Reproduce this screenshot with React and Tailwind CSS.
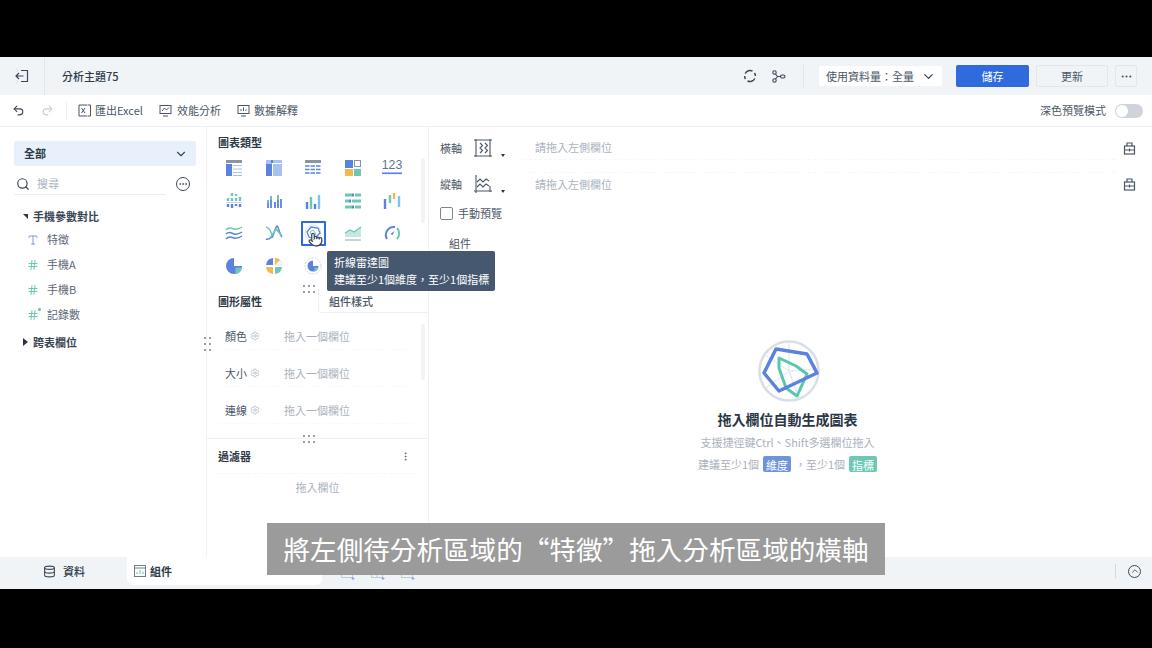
import React from 'react';
import { Undo2, Redo2, ChevronDown, Search, Ellipsis, Database, Pointer, ChevronUp, Hash, Type, Settings, MoreVertical } from 'lucide-react';

const BLUE = '#5b83dd';
const LIGHT = '#a9c1ef';
const TEAL = '#6cc7b5';
const GRAY = '#8a94a3';
const ORANGE = '#f3b94f';

function Ico({ children, size = 18 }) {
  return <svg width={size} height={size} viewBox="0 0 18 18" fill="none">{children}</svg>;
}

const chartIcons = [
  <Ico><rect x="1" y="1" width="16" height="3" fill={GRAY} /><rect x="1" y="5" width="6" height="12" fill={BLUE} /><path d="M8 6.500h9M8 10h9M8 13.500h9M8 16.500h9" stroke={LIGHT} /></Ico>,
  <Ico><rect x="1" y="1" width="16" height="3" fill={LIGHT} /><rect x="1" y="4.500" width="6" height="12.500" fill={BLUE} /><rect x="8" y="5" width="9" height="12" fill={LIGHT} /><rect x="6" y="1" width="2" height="3" fill={BLUE} /></Ico>,
  <Ico><rect x="1" y="1" width="16" height="3" fill={GRAY} /><path d="M1 7h16M1 10.500h16M1 14h16" stroke={BLUE} strokeWidth="1.600" strokeDasharray="4.500 1" /></Ico>,
  <Ico><rect x="1" y="1" width="8" height="8" fill={BLUE} /><rect x="10.500" y="1.500" width="6" height="6" stroke={GRAY} /><rect x="1" y="10" width="8" height="7" fill={ORANGE} /><rect x="10" y="10" width="7" height="7" fill={TEAL} /></Ico>,
  <Ico size={20}><text x="9" y="10" textAnchor="middle" fontSize="11" fill="#66758a" fontFamily="Liberation Sans">123</text><rect x="0" y="13" width="18" height="1.500" fill={BLUE} /></Ico>,
  <Ico><path d="M7 1v3M11 2v2M3 6v3M7 6v3M11 6v3M15 5v4" stroke={TEAL} strokeWidth="2.400" /><path d="M1 10.500h16" stroke="#cfd6de" /><path d="M3 12v3M7 12v4M11 12v2M15 12v3" stroke={BLUE} strokeWidth="2.400" /></Ico>,
  <Ico><path d="M3 8v8M6 4v12M10 10v6M13 3v13M16 7v9" stroke={BLUE} strokeWidth="1.800" /><path d="M3 8v3M6 4v4M13 3v5" stroke={TEAL} strokeWidth="1.800" /></Ico>,
  <Ico><path d="M3 10v7" stroke={BLUE} strokeWidth="2.400" /><path d="M7 5v12" stroke={TEAL} strokeWidth="2.400" /><path d="M11 12v5" stroke={BLUE} strokeWidth="2.400" /><path d="M15 3v14" stroke="#7fc3ee" strokeWidth="2.400" /></Ico>,
  <Ico><path d="M1 3h7M11 3h6M1 9h4M8 9h9M1 15h7M11 15h6" stroke={TEAL} strokeWidth="3" /><path d="M8 3h2M5 9h2M8 15h2" stroke={BLUE} strokeWidth="3" /></Ico>,
  <Ico><path d="M2 7v10" stroke={BLUE} strokeWidth="2.400" /><path d="M7 3v8" stroke={TEAL} strokeWidth="2.400" /><path d="M11 1v6" stroke={ORANGE} strokeWidth="2.400" /><path d="M16 4v11" stroke="#7fc3ee" strokeWidth="2.400" /></Ico>,
  <Ico><path d="M1 6c3-3 5-2 8-1s5 0 8-2" stroke={TEAL} strokeWidth="1.500" /><path d="M1 10c3-3 5-1 8 0s5 0 8-2" stroke={BLUE} strokeWidth="1.500" /><path d="M1 15c3-3 5-2 8-1s5 0 8-2" stroke={BLUE} strokeWidth="1.500" /></Ico>,
  <Ico><path d="M1 3c4 1 6 7 7 11" stroke={TEAL} strokeWidth="1.500" /><path d="M1 15c3 1 7-2 8-6s2-6 3-7 3 10 5 11" stroke={BLUE} strokeWidth="1.500" /><path d="M5 14l6-9 6 7" stroke={TEAL} strokeWidth="1.500" /></Ico>,
  <Ico><circle cx="9" cy="9" r="8" stroke="#dbe2ea" /><path d="M3 8l4-5 7 1 2 5-6 6-5-2z" stroke={BLUE} strokeWidth="1.300" /><path d="M6 8l3-2 3 4-3 4z" stroke={TEAL} /></Ico>,
  <Ico><path d="M1 9l5-3 4 2 7-5v10H1z" fill="#c5e8e0" /><path d="M1 9l5-3 4 2 7-5" stroke={TEAL} strokeWidth="1.300" /><path d="M1 16h16" stroke="#b9c4d0" strokeWidth="1.500" /></Ico>,
  <Ico><path d="M4 15a8 8 0 0 1 8-12" stroke={BLUE} strokeWidth="2" /><path d="M14 4a8 8 0 0 1 0 11" stroke={TEAL} strokeWidth="2" /><path d="M7.500 10l4-3-2 4z" fill="#66758a" /></Ico>,
  <Ico><path d="M9 1a8 8 0 1 0 8 8H9z" fill={BLUE} /><path d="M10.500 10.500H17a7 7 0 0 1-6.500 6.500z" fill={TEAL} /></Ico>,
  <Ico><path d="M8 1a8 8 0 0 0-7 7h7z" fill={BLUE} /><path d="M10 1a8 8 0 0 1 7 7h-7z" fill="#ffffff" stroke="#dfe4ea" /><path d="M10 1v7l5-5a8 8 0 0 0-5-2z" fill={ORANGE} /><path d="M1 10h7v7a8 8 0 0 1-7-7z" fill={ORANGE} /><path d="M10 10h7a8 8 0 0 1-7 7z" fill={TEAL} /></Ico>,
  <Ico><circle cx="9" cy="9" r="8" stroke="#c9d8f0" strokeDasharray="2 1" /><path d="M9 3.500a5.500 5.500 0 1 0 5.500 5.500H9z" fill={BLUE} /><path d="M10.500 10.500h4a5 5 0 0 1-4 4z" fill={TEAL} /></Ico>,
];

function Grip({ className = '' }) {
  return (
    <div className={`grid gap-x-[3px] gap-y-[4px] ${className}`}>
      {[0, 1, 2, 3, 4, 5].map((i) => <span key={i} className="w-[2px] h-[2px] rounded-full bg-[#77808c]" />)}
    </div>
  );
}

function FieldRow({ icon, label, plus }) {
  return (
    <div className="flex items-center h-[25px] pl-[27px] text-[11px] text-[#5c6675]">
      <span className="relative w-[20px] flex">
        {icon}
        {plus && <span className="absolute left-[11px] -top-[1px] w-[3px] h-[3px] rounded-full bg-[#55c3ad]" />}
      </span>
      {label}
    </div>
  );
}

function PropRow({ label }) {
  return (
    <div className="flex items-center h-[37px] ml-[11px] mr-[14px]">
      <div className="flex-1 h-[26px] flex items-center pl-[7px] text-[11px] border-b border-dashed border-[#f7f8f9]">
        <span className="text-[#4c5766] w-[22px] whitespace-nowrap">{label}</span>
        <Settings className="w-[10px] h-[10px] ml-[3px] text-[#b5bec9]" />
        <span className="ml-[24px] text-[#aab2bd]">拖入一個欄位</span>
      </div>
    </div>
  );
}

function AxisRow({ label, edge, children }) {
  return (
    <div className="flex items-center h-[36px] pl-[11px] pr-[16px] text-[11px]">
      <span className="text-[#4c5766] w-[33px]">{label}</span>
      <span className="relative w-[26px] h-[20px]">
        {children}
        <span className="absolute left-[28px] top-[16px] border-x-[2.500px] border-t-[3px] border-x-transparent border-t-[#2c3644]" />
      </span>
      <div className={`ml-[25px] flex-1 h-[24px] flex items-center pl-[11px] text-[#aab2bd] border-dashed border-[#f5f7f9] ${edge}`}>請拖入左側欄位</div>
      <svg className="ml-[8px]" width="13" height="13" viewBox="0 0 13 13" fill="none" stroke="#4c5766" strokeWidth="1.200">
        <rect x="1.500" y="4" width="10" height="8" /><path d="M4 4V1h5v3M1.500 8h10M6.500 6.500v3" />
      </svg>
    </div>
  );
}

function AddChartIcon({ children }) {
  return (
    <svg width="14" height="14" viewBox="0 0 14 14" fill="none" stroke="#c3cad3">
      <rect x="0.500" y="0.500" width="11" height="11" />
      {children}
      <path d="M12 11v3M10.500 12.500h3" stroke="#8aa5e2" />
    </svg>
  );
}

export default function App() {
  return (
    <div className="relative w-[1152px] h-[648px] bg-black flex flex-col overflow-hidden" style={{ fontFamily: '"Noto Sans CJK TC", "Liberation Sans", sans-serif' }}>
      <div className="h-[57px]" />

      {/* top header */}
      <div className="h-[38px] bg-[#f0f4f7] flex items-center">
        <div className="w-[45px] h-full flex items-center justify-center border-r border-[#e3e7eb]">
          <svg width="14" height="14" viewBox="0 0 14 14" fill="none" stroke="#3d4857" strokeWidth="1.200">
            <path d="M6 1.500h6.500v11H6M8.500 7H1M4 4L1 7l3 3" />
          </svg>
        </div>
        <span className="ml-[17px] text-[11px] font-medium text-[#2f3a49]">分析主題75</span>
        <div className="ml-auto flex items-center">
          <svg width="14" height="14" viewBox="0 0 14 14" fill="none" stroke="#3d4857" strokeWidth="1.500">
            <path d="M2.200 4.500A5.500 5.500 0 0 1 9.500 2M11.800 9.500A5.500 5.500 0 0 1 4.500 12M11.500 4a5.500 5.500 0 0 1 .9 3M2.500 10a5.500 5.500 0 0 1-.9-3" />
          </svg>
          <svg className="ml-[14px]" width="15" height="13" viewBox="0 0 15 13" fill="none" stroke="#3d4857" strokeWidth="1.100">
            <circle cx="3.500" cy="2.500" r="1.700" /><circle cx="3.500" cy="10.500" r="1.700" /><rect x="9.500" y="5" width="4.500" height="3" rx="1.500" /><path d="M4.500 4l2 2.500h3M6.500 6.500L4.500 9" />
          </svg>
          <div className="w-px h-[22px] bg-[#e1e5e9] ml-[17px]" />
          <div className="ml-[15px] w-[123px] h-[20px] bg-white rounded-[2px] flex items-center pl-[7px] text-[11px] text-[#4c5766]">
            使用資料量：全量
            <ChevronDown className="w-[15px] h-[15px] ml-[7px] text-[#3d4857]" />
          </div>
          <div className="ml-[14px] w-[73px] h-[22px] bg-[#2f6bdc] rounded-[2px] flex items-center justify-center text-[11px] text-white">儲存</div>
          <div className="ml-[7px] w-[72px] h-[22px] border border-[#e3e7eb] rounded-[2px] flex items-center justify-center text-[11px] text-[#4c5766]">更新</div>
          <div className="ml-[7px] mr-[15px] w-[22px] h-[22px] border border-[#e3e7eb] rounded-[2px] flex items-center justify-center">
            <Ellipsis className="w-[13px] h-[13px] text-[#4c5766]" />
          </div>
        </div>
      </div>

      {/* toolbar */}
      <div className="h-[32px] bg-white border-b border-[#eef0f3] flex items-center text-[11px] text-[#4c5766]">
        <Undo2 className="ml-[12px] w-[13px] h-[13px] text-[#3d4857]" />
        <Redo2 className="ml-[16px] w-[13px] h-[13px] text-[#c9ced5]" />
        <div className="w-px h-[17px] bg-[#eceef1] ml-[12px]" />
        <svg className="ml-[11px]" width="13" height="13" viewBox="0 0 13 13" fill="none" stroke="#4c5766"><path d="M9.500 1H1v11h8.500M10 1h2.500v11H10" /><path d="M3.500 4l3.500 5M7 4L3.500 9" /></svg>
        <span className="ml-[4px]">匯出Excel</span>
        <svg className="ml-[16px]" width="13" height="13" viewBox="0 0 13 13" fill="none" stroke="#4c5766"><rect x="1" y="1.500" width="11" height="8" /><path d="M3 7l2.500-3 2 2L10 3.500M4 12h5" /></svg>
        <span className="ml-[5px]">效能分析</span>
        <svg className="ml-[16px]" width="13" height="13" viewBox="0 0 13 13" fill="none" stroke="#4c5766"><rect x="1" y="1.500" width="11" height="8" /><path d="M4 7V5M6.500 7V3.500M9 7V5.500M4 12h5" /></svg>
        <span className="ml-[4px]">數據解釋</span>
        <span className="ml-auto text-[#4c5766]">深色預覽模式</span>
        <div className="ml-[9px] mr-[9px] w-[28px] h-[14px] rounded-full bg-[#cfd4da] flex items-center pl-[1px]">
          <span className="w-[12px] h-[12px] rounded-full bg-white" />
        </div>
      </div>

      {/* main */}
      <div className="h-[430px] bg-white flex">
        {/* left field panel */}
        <div className="relative w-[207px] border-r border-[#eef0f3] pt-[14px]">
          <div className="mx-[14px] w-[182px] h-[25px] rounded-[3px] bg-[#e8f0fb] flex items-center justify-between pl-[10px] pr-[8px] text-[11px] font-bold text-[#2f3a49]">
            全部
            <ChevronDown className="w-[14px] h-[14px] text-[#3d4857]" />
          </div>
          <div className="mt-[7px] flex items-center h-[21px] pl-[16px]">
            <Search className="w-[14px] h-[14px] text-[#3d4857]" />
            <span className="ml-[7px] text-[11px] text-[#aab2bd]">搜尋</span>
            <span className="ml-[117px] w-[14px] h-[14px] rounded-full border border-[#3d4857] flex items-center justify-center">
              <Ellipsis className="w-[10px] h-[10px] text-[#3d4857]" />
            </span>
          </div>
          <div className="ml-[14px] w-[152px] h-px bg-[#eceef1]" />
          <div className="mt-[11px] flex items-center h-[20px] pl-[23px] text-[11px] font-bold text-[#3a4554]">
            <span className="w-0 h-0 border-l-[5px] border-t-[5px] border-l-transparent border-t-[#2c3644] mr-[5px]" />
            手機參數對比
          </div>
          <div className="mt-[1px]">
            <FieldRow icon={<Type className="w-[12px] h-[12px] text-[#7d9bd8]" />} label="特徵" />
            <FieldRow icon={<Hash className="w-[12px] h-[12px] text-[#6cc7b5]" />} label="手機A" />
            <FieldRow icon={<Hash className="w-[12px] h-[12px] text-[#6cc7b5]" />} label="手機B" />
            <FieldRow icon={<Hash className="w-[12px] h-[12px] text-[#6cc7b5]" />} label="記錄數" plus />
          </div>
          <div className="mt-[5px] flex items-center h-[20px] pl-[23px] text-[11px] font-bold text-[#3a4554]">
            <span className="w-0 h-0 border-l-[5px] border-y-[4px] border-y-transparent border-l-[#2c3644] mr-[5px]" />
            跨表欄位
          </div>
          <Grip className="absolute -right-[5px] top-[210px] grid-cols-2" />
        </div>

        {/* middle panel */}
        <div className="relative w-[222px] border-r border-[#eef0f3] flex flex-col">
          <div className="h-[162px] pt-[6px] pl-[11px]">
            <div className="text-[11px] font-bold text-[#2f3a49] leading-[18px]">圖表類型</div>
            <div className="mt-[1px] -ml-[3.500px] grid grid-cols-[repeat(5,39.500px)] auto-rows-[32.500px] items-center justify-items-center w-[198px]">
              {chartIcons.map((icon, i) => (
                <div key={i} className={i === 12 ? 'w-[25px] h-[25px] flex items-center justify-center border-2 border-[#2f6bdc] rounded-[1px]' : 'flex'}>{icon}</div>
              ))}
            </div>
          </div>
          <div className="h-[24px] flex text-[11px] font-bold">
            <div className="w-[111px] pl-[11px] text-[#2f3a49] leading-[24px]">圖形屬性</div>
            <div className="flex-1 pl-[10px] text-[#4c5766] font-medium leading-[24px] border-l border-b border-[#eef0f3] rounded-bl-[3px]">組件樣式</div>
          </div>
          <div className="pt-[5px] h-[126px] border-b border-[#eef0f3]">
            <PropRow label="顏色" />
            <PropRow label="大小" />
            <PropRow label="連線" />
          </div>
          <div className="flex items-center justify-between pl-[11px] pr-[17px] h-[34px] text-[11px] font-bold text-[#2f3a49]">
            過濾器
            <MoreVertical className="w-[11px] h-[11px] text-[#5c6675]" />
          </div>
          <div className="mx-[11px] border-t border-dashed border-[#f5f6f8]" />
          <div className="mt-[5px] text-center text-[11px] text-[#aab2bd] leading-[16px]">拖入欄位</div>

          <div className="absolute right-[3px] top-[31px] w-[4px] h-[65px] rounded-full bg-[#f1f3f5]" />
          <div className="absolute right-[3px] top-[197px] w-[4px] h-[56px] rounded-full bg-[#f1f3f5]" />
          <Grip className="absolute left-[96px] top-[158px] grid-cols-3" />
          <Grip className="absolute left-[96px] top-[308px] grid-cols-3" />
          <Pointer className="absolute left-[101px] top-[105px] w-[15px] h-[15px] text-[#3d4857] fill-white" />
          <div className="absolute left-[120px] top-[124px] w-[168px] h-[40px] rounded-[2px] bg-[#465870] px-[7px] py-[3px] text-[11px] leading-[17px] text-white whitespace-nowrap z-10">
            <div>折線雷達圖</div>
            <div>建議至少1個維度，至少1個指標</div>
          </div>
        </div>

        {/* analysis area */}
        <div className="flex-1 flex flex-col relative">
          <div className="pt-[3px]">
            <AxisRow label="橫軸" edge="border-b">
              <svg width="20" height="20" viewBox="0 0 20 20" fill="none" stroke="#4c5766" strokeWidth="1.100">
                <path d="M1 2h18M1 18h18M3 1v18M17 1v18" /><path d="M7 5l2.500 2.500L7 10l2.500 2.500L7 15M12 5l2.500 2.500L12 10l2.500 2.500L12 15" />
              </svg>
            </AxisRow>
            <AxisRow label="縱軸" edge="border-t">
              <svg width="20" height="20" viewBox="0 0 20 20" fill="none" stroke="#4c5766" strokeWidth="1.100">
                <path d="M3 1v18M1 17h18M17 12v6" /><path d="M4 8l3-3 3 3 3-3 3 2M4 13l3-3 3 3 3-3 3 2" />
              </svg>
            </AxisRow>
          </div>
          <div className="mt-[2px] flex items-center h-[18px] pl-[11px] text-[11px] text-[#4c5766]">
            <span className="w-[13px] h-[13px] border border-[#7d8692] rounded-[2px] mr-[5px]" />
            手動預覽
          </div>
          <div className="mt-[12px] pl-[20px] text-[11px] text-[#4c5766] leading-[18px]">組件</div>

          <div className="mt-[87px] flex flex-col items-center pr-[6px]">
            <svg className="ml-[2px]" width="64" height="64" viewBox="0 0 64 64" fill="none">
              <circle cx="32" cy="32" r="29.500" stroke="#d9dfe5" strokeWidth="2.500" />
              <path d="M32 32V3M32 32L8 16M32 32l-23 17M32 32l10 27M32 32l29-2" stroke="#e8ecef" strokeWidth="1.500" />
              <path d="M22 19l17 8 11 8-10 22-11-8-7-20z" stroke="#5cc5ae" strokeWidth="3" strokeLinejoin="round" />
              <path d="M19 10l31 5 10 19-38 18L7 34z" stroke="#5b83dd" strokeWidth="3.500" strokeLinejoin="round" />
            </svg>
            <div className="mt-[5px] text-[14px] font-bold leading-[22px] text-[#2b3645]">拖入欄位自動生成圖表</div>
            <div className="mt-[3px] text-[11px] leading-[18px] text-[#aab2bd]">支援捷徑鍵Ctrl、Shift多選欄位拖入</div>
            <div className="mt-[4px] flex items-center text-[11px] leading-[18px] text-[#aab2bd]">
              建議至少1個
              <span className="mx-[4px] px-[3px] h-[16px] rounded-[2px] bg-[#6f95d8] text-white">維度</span>
              ，至少1個
              <span className="ml-[4px] px-[3px] h-[16px] rounded-[2px] bg-[#6cc7b5] text-white">指標</span>
            </div>
          </div>
        </div>
      </div>

      {/* bottom tabs */}
      <div className="h-[32px] bg-[#f0f4f7] flex items-center pb-[4px]">
        <Database className="ml-[43px] w-[13px] h-[13px] text-[#3d4857]" />
        <span className="ml-[7px] text-[11px] font-medium text-[#2f3a49]">資料</span>
        <div className="ml-[42px] w-[195px] h-[28px] self-start bg-white rounded-b-[6px] flex items-center pl-[7px] text-[11px] font-bold text-[#2f3a49]">
          <svg width="12" height="12" viewBox="0 0 12 12" fill="none" stroke="#6f7b8a"><rect x="0.500" y="0.500" width="11" height="11" /><path d="M0.500 3h11" /><path d="M3 9V7M6 9V5M9 9V6.500" stroke="#5cc5ae" /></svg>
          <span className="ml-[4px]">組件</span>
        </div>
        <div className="ml-[19px] flex gap-[16px] mt-[4px]">
          <AddChartIcon><path d="M0.500 4h11M3 9V7M6 9V6" /></AddChartIcon>
          <AddChartIcon><path d="M0.500 4h11M6 0.500v11" /></AddChartIcon>
          <AddChartIcon><path d="M0.500 4h11M0.500 8h11" /></AddChartIcon>
        </div>
        <div className="ml-auto w-px h-[14px] bg-[#d3d8dd]" />
        <div className="ml-[12px] mr-[11px] w-[13px] h-[13px] rounded-full border border-[#3d4857] flex items-center justify-center">
          <ChevronUp className="w-[10px] h-[10px] text-[#3d4857]" />
        </div>
      </div>
      <div className="flex-1" />

      {/* subtitle overlay */}
      <div className="absolute left-[267px] top-[523px] w-[618px] h-[52px] bg-[#9b9b9b] flex items-center justify-center text-[26.600px] text-white whitespace-nowrap z-20">
        將左側待分析區域的“特徵”拖入分析區域的橫軸
      </div>
    </div>
  );
}
